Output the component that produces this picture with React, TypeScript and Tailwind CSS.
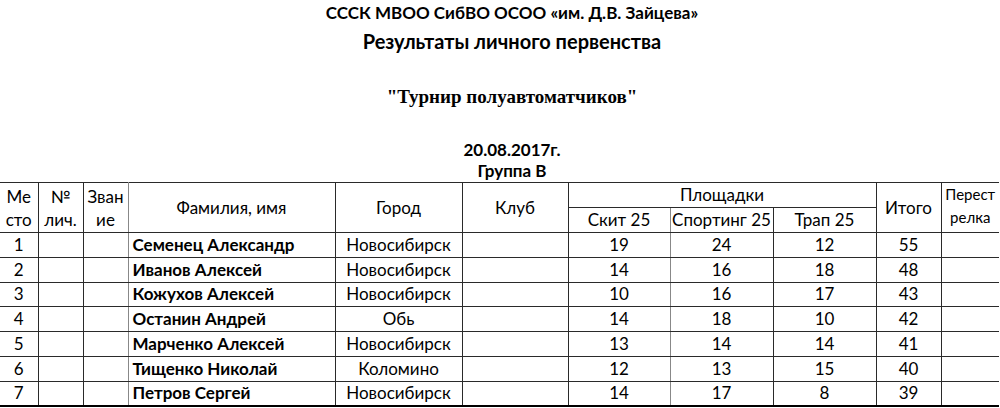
import React from 'react'

const rows = [
  { place: 1, name: 'Семенец Александр', city: 'Новосибирск', skeet: 19, sporting: 24, trap: 12, total: 55 },
  { place: 2, name: 'Иванов Алексей', city: 'Новосибирск', skeet: 14, sporting: 16, trap: 18, total: 48 },
  { place: 3, name: 'Кожухов Алексей', city: 'Новосибирск', skeet: 10, sporting: 16, trap: 17, total: 43 },
  { place: 4, name: 'Останин Андрей', city: 'Обь', skeet: 14, sporting: 18, trap: 10, total: 42 },
  { place: 5, name: 'Марченко Алексей', city: 'Новосибирск', skeet: 13, sporting: 14, trap: 14, total: 41 },
  { place: 6, name: 'Тищенко Николай', city: 'Коломино', skeet: 12, sporting: 13, trap: 15, total: 40 },
  { place: 7, name: 'Петров Сергей', city: 'Новосибирск', skeet: 14, sporting: 17, trap: 8, total: 39 },
]

const cell = 'border border-[#2a2a2a] p-0 text-center align-middle leading-[20px]'

export default function App() {
  return (
    <div className="w-[1000px] h-[408px] overflow-hidden bg-white text-black font-['Lato','Noto_Sans',sans-serif]">
      <div className="pl-6 text-center">
        <div className="leading-[26px] text-[17px] font-bold">СССК МВОО СибВО ОСОО «им. Д.В. Зайцева»</div>
        <div className="leading-[30px] text-[20px] font-bold">Результаты личного первенства</div>
        <div className="mt-[28px] leading-[26px] text-[19px] font-bold font-['Liberation_Serif',serif]">"Турнир полуавтоматчиков"</div>
        <div className="mt-[29px] leading-[22px] text-[17px] font-bold">20.08.2017г.</div>
        <div className="leading-[20px] text-[17px] font-bold">Группа В</div>
      </div>

      <table className="mt-px w-[999px] table-fixed border-collapse border-t-[1.5px] border-b-2 border-black text-[17px]">
        <colgroup>
          <col className="w-[38px]" />
          <col className="w-[45px]" />
          <col className="w-[45px]" />
          <col className="w-[207px]" />
          <col className="w-[127px]" />
          <col className="w-[106px]" />
          <col className="w-[102px]" />
          <col className="w-[103px]" />
          <col className="w-[103px]" />
          <col className="w-[65px]" />
          <col className="w-[58px]" />
        </colgroup>
        <thead>
          <tr className="h-[25px]">
            <th rowSpan={2} className={`${cell} border-l-0 font-normal !leading-[23px]`}>Ме<br />сто</th>
            <th rowSpan={2} className={`${cell} font-normal !leading-[23px]`}>№<br />лич.</th>
            <th rowSpan={2} className={`${cell} border-r-[#888] font-normal !leading-[23px]`}>Зван<br />ие</th>
            <th rowSpan={2} className={`${cell} font-normal`}>Фамилия, имя</th>
            <th rowSpan={2} className={`${cell} font-normal`}>Город</th>
            <th rowSpan={2} className={`${cell} font-normal`}>Клуб</th>
            <th colSpan={3} className={`${cell} font-normal`}>Площадки</th>
            <th rowSpan={2} className={`${cell} font-normal`}>Итого</th>
            <th rowSpan={2} className={`${cell} border-r-0 pb-[3px] font-normal text-[15px] !leading-[23px]`}>Перест<br />релка</th>
          </tr>
          <tr className="h-[25px]">
            <th className={`${cell} border-r-[#888] font-normal`}>Скит 25</th>
            <th className={`${cell} font-normal`}>Спортинг 25</th>
            <th className={`${cell} font-normal`}>Трап 25</th>
          </tr>
        </thead>
        <tbody>
          {rows.map((r) => (
            <tr key={r.place} className="h-[24.8px]">
              <td className={`${cell} border-l-0`}>{r.place}</td>
              <td className={cell}></td>
              <td className={`${cell} border-r-[#888]`}></td>
              <td className={`${cell} pl-1 text-left font-bold`}>{r.name}</td>
              <td className={cell}>{r.city}</td>
              <td className={cell}></td>
              <td className={`${cell} border-r-[#888]`}>{r.skeet}</td>
              <td className={cell}>{r.sporting}</td>
              <td className={cell}>{r.trap}</td>
              <td className={cell}>{r.total}</td>
              <td className={`${cell} border-r-0`}></td>
            </tr>
          ))}
        </tbody>
      </table>
    </div>
  )
}
